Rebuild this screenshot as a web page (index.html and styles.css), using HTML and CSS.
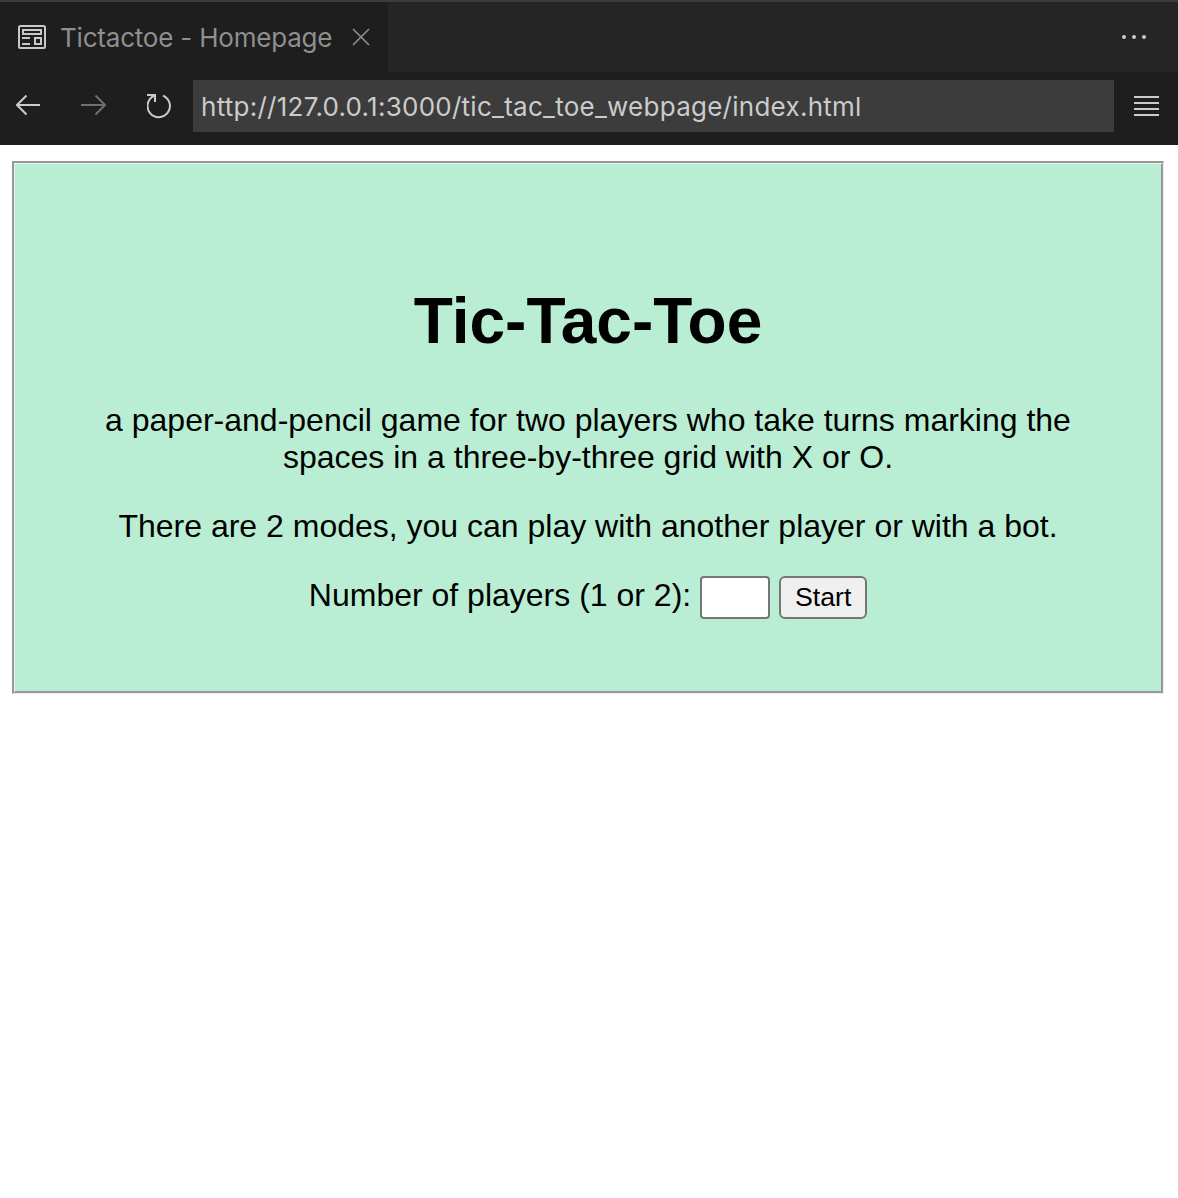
FILE: index.html
```html
<!DOCTYPE html>
<html lang="en">
<head>
<meta charset="utf-8">
<title>Tictactoe - Homepage</title>
<link rel="stylesheet" href="styles.css">
</head>
<body>
<header class="browser">
  <div class="tabs">
    <div class="tab">
      <svg class="tab-icon" width="28" height="24" viewBox="0 0 28 24" fill="none" stroke="#c8c8c8" stroke-width="2"><rect x="1" y="1" width="26" height="22" rx="1.5"/><path d="M5 5h18v4H5zM17 13h6v6h-6zM4 13h8M4 19h8"/></svg>
      <span class="tab-title">Tictactoe - Homepage</span>
      <svg class="tab-close" width="18" height="18" viewBox="0 0 18 18" stroke="#8c8c8c" stroke-width="1.7"><path d="M1 1l16 16M17 1L1 17"/></svg>
    </div>
    <svg class="more" width="24" height="4" viewBox="0 0 24 4" fill="#cbcbcb"><circle cx="2" cy="2" r="2"/><circle cx="12" cy="2" r="2"/><circle cx="22" cy="2" r="2"/></svg>
  </div>
  <nav class="toolbar">
    <svg class="back" width="25" height="22" viewBox="0 0 25 22" fill="none" stroke="#cbcbcb" stroke-width="2"><path d="M24 10H1.500M10.500 0.500L1 10l9.500 9.500"/></svg>
    <svg class="forward" width="25" height="22" viewBox="0 0 25 22" fill="none" stroke="#6f6f6f" stroke-width="2"><path d="M0 10h23.500M14.500 0.500L24 10l-9.500 9.500"/></svg>
    <svg class="reload" width="26" height="26" viewBox="0 0 26 26" fill="none" stroke="#cbcbcb" stroke-width="2"><path d="M0 2h8v7M7 2.800A11.200 11.200 0 1 0 16 2.600"/></svg>
    <div class="address"><span class="url">http://127.0.0.1:3000/tic_tac_toe_webpage/index.html</span></div>
    <svg class="menu" width="25" height="20" viewBox="0 0 25 20" fill="#cbcbcb"><path d="M0 0h25v2H0zM0 6h25v2H0zM0 12h25v2H0zM0 18h25v2H0z"/></svg>
  </nav>
</header>
<main class="frame">
  <form class="card">
    <h1 class="title">Tic-Tac-Toe</h1>
    <p class="text">a paper-and-pencil game for two players who take turns marking the<br>spaces in a three-by-three grid with X or O.</p>
    <p class="text">There are 2 modes, you can play with another player or with a bot.</p>
    <div class="players">
      <label class="label" for="players">Number of players (1 or 2):</label>
      <input class="count" id="players" type="text">
      <button class="start" type="button">Start</button>
    </div>
  </form>
</main>
</body>
</html>
```
FILE: styles.css
```css
* { box-sizing: border-box; }
body { margin: 0; background: #fff; font-family: "Liberation Sans", Arial, sans-serif; color: #000; }
svg { display: block; flex: none; }

.browser { height: 145px; background: #1e1e1e; border-top: 2px solid #3c3c3c; font-family: Inter, sans-serif; }
.tabs { height: 70px; display: flex; align-items: center; justify-content: space-between; background: #252525; padding-right: 32px; }
.tab { width: 388px; height: 70px; display: flex; align-items: center; background: #1e1e1e; padding-left: 18px; }
.tab-title { width: 290px; margin-left: 14px; padding-top: 2px; font-size: 26px; line-height: 32px; letter-spacing: -0.2px; color: #8f8f8f; white-space: nowrap; }
.tab-close { margin-left: 1.5px; }

.toolbar { display: flex; align-items: center; height: 68px; padding-left: 16px; }
.forward { margin-left: 40px; }
.reload { margin-left: 41px; }
.address { width: 921px; height: 52px; margin-left: 20px; padding: 2px 0 0 8px; display: flex; align-items: center; background: #3c3c3c; }
.url { font-size: 26px; line-height: 32px; letter-spacing: 0.26px; color: #cbcbcb; white-space: nowrap; }
.menu { margin-left: 20px; }

.frame { width: 1152px; height: 533px; margin: 16px 0 0 12px; border: solid; border-width: 2px 1px 1px 2px; border-color: #999 #eee #eee #999; }
.card { height: 100%; padding-top: 120px; border: solid; border-width: 1px 2px 2px 1px; border-color: #eee #999 #999 #eee; background: #baeed4; text-align: center; }
.title { margin: 0; font-size: 64px; line-height: 74px; font-weight: 700; }
.text { margin: 44px 0 0; font-size: 32px; line-height: 37px; white-space: nowrap; }
.text + .text { margin-top: 32px; }
.players { display: flex; justify-content: center; margin-top: 31px; }
.label { font-size: 32px; line-height: 39px; white-space: nowrap; }
.count { width: 70px; height: 43px; margin: 0 0 0 9px; border: 2px solid #767676; border-radius: 4px; background: #fff; }
.start { width: 88px; height: 43px; margin: 0 0 0 9px; padding: 0 0 2px; border: 2px solid #767676; border-radius: 6px; background: #efefef; color: #000; font: 26.700px/36px "Liberation Sans", Arial, sans-serif; }
```
